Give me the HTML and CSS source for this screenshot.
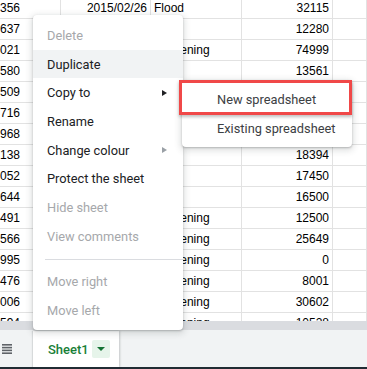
FILE: index.html
```html
<!DOCTYPE html>
<html lang="en">

<head>
    <meta charset="UTF-8">
    <meta name="viewport" content="width=device-width, initial-scale=1.0">
    <title>Sheet1 - tab menu</title>
    <link rel="stylesheet" href="styles.css">
</head>

<body>
    <div class="sheet">
        <section class="grid">
            <div class="row"><div class="cell id">356</div><div class="cell num">2015/02/26</div><div class="cell">Flood</div><div class="cell num">32115</div><div class="cell"></div></div>
            <div class="row"><div class="cell id">637</div><div class="cell num"></div><div class="cell"></div><div class="cell num">12280</div><div class="cell"></div></div>
            <div class="row"><div class="cell id">021</div><div class="cell num"></div><div class="cell">Tightening</div><div class="cell num">74999</div><div class="cell"></div></div>
            <div class="row"><div class="cell id">580</div><div class="cell num"></div><div class="cell"></div><div class="cell num">13561</div><div class="cell"></div></div>
            <div class="row"><div class="cell id">509</div><div class="cell num"></div><div class="cell"></div><div class="cell num"></div><div class="cell"></div></div>
            <div class="row"><div class="cell id">716</div><div class="cell num"></div><div class="cell"></div><div class="cell num"></div><div class="cell"></div></div>
            <div class="row"><div class="cell id">968</div><div class="cell num"></div><div class="cell"></div><div class="cell num"></div><div class="cell"></div></div>
            <div class="row"><div class="cell id">138</div><div class="cell num"></div><div class="cell"></div><div class="cell num">18394</div><div class="cell"></div></div>
            <div class="row"><div class="cell id">052</div><div class="cell num"></div><div class="cell"></div><div class="cell num">17450</div><div class="cell"></div></div>
            <div class="row"><div class="cell id">644</div><div class="cell num"></div><div class="cell"></div><div class="cell num">16500</div><div class="cell"></div></div>
            <div class="row"><div class="cell id">491</div><div class="cell num"></div><div class="cell">Tightening</div><div class="cell num">12500</div><div class="cell"></div></div>
            <div class="row"><div class="cell id">566</div><div class="cell num"></div><div class="cell">Tightening</div><div class="cell num">25649</div><div class="cell"></div></div>
            <div class="row"><div class="cell id">995</div><div class="cell num"></div><div class="cell">Tightening</div><div class="cell num">0</div><div class="cell"></div></div>
            <div class="row"><div class="cell id">476</div><div class="cell num"></div><div class="cell">Tightening</div><div class="cell num">8001</div><div class="cell"></div></div>
            <div class="row"><div class="cell id">006</div><div class="cell num"></div><div class="cell">Tightening</div><div class="cell num">30602</div><div class="cell"></div></div>
            <div class="row"><div class="cell id">594</div><div class="cell num"></div><div class="cell">Tightening</div><div class="cell num">10528</div><div class="cell"></div></div>
        </section>

        <div class="hscroll"></div>

        <footer class="tabbar">
            <div class="all-sheets">
                <svg width="10" height="10" viewBox="0 0 10 10">
                    <rect x="0" y="0" width="10" height="1.6" fill="#5f6368"/>
                    <rect x="0" y="2.8" width="10" height="1.6" fill="#5f6368"/>
                    <rect x="0" y="5.6" width="10" height="1.6" fill="#5f6368"/>
                    <rect x="0" y="8.4" width="10" height="1.6" fill="#5f6368"/>
                </svg>
            </div>
            <div class="tab">
                <span class="tab-name">Sheet1</span>
                <span class="tab-drop">
                    <svg width="8" height="4" viewBox="0 0 8 4"><path d="M0 0h8L4 4z" fill="#137333"/></svg>
                </span>
            </div>
        </footer>
        <div class="edge"></div>

        <ul class="menu">
            <li class="item disabled">Delete</li>
            <li class="item hover">Duplicate</li>
            <li class="item">Copy to <span class="arrow dark"></span></li>
            <li class="item">Rename</li>
            <li class="item">Change colour <span class="arrow"></span></li>
            <li class="item">Protect the sheet</li>
            <li class="item disabled">Hide sheet</li>
            <li class="item disabled">View comments</li>
            <li class="sep"></li>
            <li class="item disabled">Move right</li>
            <li class="item disabled">Move left</li>
        </ul>

        <ul class="menu submenu">
            <li class="item">New spreadsheet</li>
            <li class="item">Existing spreadsheet</li>
        </ul>

        <div class="callout"></div>
    </div>
</body>

</html>
```

FILE: styles.css
```css
*, *::before, *::after {
    box-sizing: border-box;
}

body {
    margin: 0;
    padding: 0;
    background: #ffffff;
    font-family: 'Liberation Sans', Arial, sans-serif;
}

.sheet {
    position: relative;
    width: 367px;
    height: 369px;
    overflow: hidden;
}

/* grid */
.grid {
    height: 321px;
    overflow: hidden;
}

.row {
    display: grid;
    grid-template-columns: 61px 90px 91px 91px 1fr;
    height: 21px;
    border-bottom: 1px solid #e2e2e2;
}

.row:first-child {
    margin-top: -2px;
}

.cell {
    border-right: 1px solid #e2e2e2;
    padding: 0 3px;
    font-size: 12px;
    line-height: 20px;
    color: #000;
    white-space: nowrap;
    overflow: hidden;
}

.cell.id {
    padding-left: 0;
}

.cell.num {
    text-align: right;
}

.hscroll {
    height: 9px;
    background: #dadce0;
}

/* sheet tabs */
.tabbar {
    display: flex;
    height: 37px;
    background: #f1f3f4;
}

.all-sheets {
    width: 33px;
    display: flex;
    align-items: center;
    padding-left: 2px;
}

.tab {
    display: flex;
    align-items: center;
    gap: 3px;
    width: 86px;
    margin-top: 1px;
    padding-left: 15px;
    background: #fff;
    box-shadow: 1px 0 2px rgba(60, 64, 67, 0.25), -1px 0 1px rgba(60, 64, 67, 0.12);
}

.tab-name {
    font-family: Roboto, sans-serif;
    font-size: 13px;
    font-weight: 500;
    color: #188038;
}

.tab-drop {
    display: flex;
    align-items: center;
    justify-content: center;
    width: 18px;
    height: 18px;
    background: #e6f4ea;
    border-radius: 2px;
}

.edge {
    height: 2px;
    background: #202b33;
}

/* context menu */
.menu {
    position: absolute;
    left: 33px;
    top: 15px;
    width: 150px;
    margin: 0;
    padding: 6px 0 5px;
    list-style: none;
    background: #fff;
    border-radius: 4px;
    box-shadow: 0 2px 6px 2px rgba(60, 64, 67, 0.15), 0 1px 2px rgba(60, 64, 67, 0.3);
    font-family: Roboto, sans-serif;
    font-size: 12.8px;
    color: #202124;
}

.item {
    display: flex;
    align-items: center;
    justify-content: space-between;
    height: 28.7px;
    padding: 0 16px 0 14px;
}

.item.hover {
    background: #f1f3f4;
}

.item.disabled {
    color: #a6a8ab;
}

.arrow {
    width: 0;
    height: 0;
    border-top: 3px solid transparent;
    border-bottom: 3px solid transparent;
    border-left: 5px solid #9aa0a6;
}

.arrow.dark {
    border-left-color: #202124;
}

.sep {
    height: 1px;
    margin: 8px 0 8px 12px;
    background: #dadce0;
}

.submenu {
    left: 182px;
    top: 80px;
    width: 170px;
    padding: 5px 0;
    color: #3c4043;
}

.submenu .item {
    padding-left: 35px;
}

.callout {
    position: absolute;
    left: 179px;
    top: 80px;
    width: 173px;
    height: 35px;
    border: 3px solid #f04848;
    box-shadow: 0 2px 3px rgba(0, 0, 0, 0.25);
}
```
